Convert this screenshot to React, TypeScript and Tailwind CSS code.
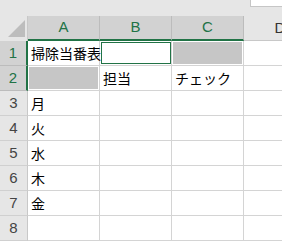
import React from 'react';

const rows: { n: number; a?: string; b?: string; c?: string }[] = [
  { n: 1, a: '掃除当番表' },
  { n: 2, b: '担当', c: 'チェック' },
  { n: 3, a: '月' },
  { n: 4, a: '火' },
  { n: 5, a: '水' },
  { n: 6, a: '木' },
  { n: 7, a: '金' },
  { n: 8 },
];

const cellFont = { fontFamily: '"Noto Sans CJK JP", "Noto Sans", sans-serif' };
const headFont = { fontFamily: '"Liberation Sans", Arial, sans-serif' };

const Shade = () => (
  <div className="absolute top-[1px] left-[1px] right-[1px] bottom-[1px] bg-[#c6c6c6]" />
);

export default function App() {
  return (
    <div className="w-[282px] h-[242px] overflow-hidden bg-white select-none">
      {/* formula bar edge */}
      <div className="flex h-[16px] bg-[#e6e6e6]">
        <div className="ml-auto w-[32px] h-[7px] bg-white border-l border-b border-[#c6c6c6]" />
      </div>

      {/* column headers */}
      <div className="flex h-[25px] bg-[#e6e6e6] text-[15px]" style={headFont}>
        <div className="w-[28px] shrink-0 border-r border-[#c8c8c8] flex items-end justify-end pb-[4px] pr-[2px]">
          <svg width="17" height="17" viewBox="0 0 17 17">
            <polygon points="0,17 17,17 17,0" fill="#bdbdbd" />
          </svg>
        </div>
        {['A', 'B', 'C'].map(l => (
          <div
            key={l}
            className="w-[72px] shrink-0 bg-[#d2d2d2] border-r border-[#bcbcbc] border-b-2 border-b-[#217346] flex items-center justify-center text-[#217346]"
          >
            {l}
          </div>
        ))}
        <div className="w-[72px] shrink-0 border-b border-[#c8c8c8] flex items-center justify-center text-[#333]">
          D
        </div>
      </div>

      {/* grid rows */}
      {rows.map(r => {
        const sel = r.n <= 2;
        return (
          <div key={r.n} className="flex h-[25px]">
            <div
              className={
                sel
                  ? 'w-[28px] shrink-0 bg-[#d2d2d2] border-r-2 border-[#217346] border-b border-b-[#bcbcbc] flex items-center justify-center text-[15px] text-[#217346]'
                  : 'w-[28px] shrink-0 bg-[#e6e6e6] border-r border-[#c8c8c8] border-b border-b-[#d0d0d0] flex items-center justify-center text-[15px] text-[#444]'
              }
              style={headFont}
            >
              {r.n}
            </div>

            <div className="relative w-[72px] shrink-0 border-r border-b border-[#d4d4d4]" style={cellFont}>
              {r.n === 2 && <Shade />}
              {r.a && (
                <span className="relative z-10 block pl-[3px] pt-[2px] whitespace-nowrap text-[14px] leading-[20px] text-black">
                  {r.a}
                </span>
              )}
            </div>

            <div className="relative w-[72px] shrink-0 border-r border-b border-[#d4d4d4]" style={cellFont}>
              {r.n === 1 && (
                <div className="absolute top-[1px] left-[1px] right-0 bottom-[1px] border border-[#217346] z-20" />
              )}
              {r.b && (
                <span className="block pl-[3px] pt-[2px] whitespace-nowrap text-[14px] leading-[20px] text-black">
                  {r.b}
                </span>
              )}
            </div>

            <div className="relative w-[72px] shrink-0 border-r border-b border-[#d4d4d4]" style={cellFont}>
              {r.n === 1 && <Shade />}
              {r.c && (
                <span className="block pl-[3px] pt-[2px] whitespace-nowrap text-[14px] leading-[20px] text-black">
                  {r.c}
                </span>
              )}
            </div>

            <div className="w-[72px] shrink-0 border-b border-[#d4d4d4]" />
          </div>
        );
      })}
    </div>
  );
}
